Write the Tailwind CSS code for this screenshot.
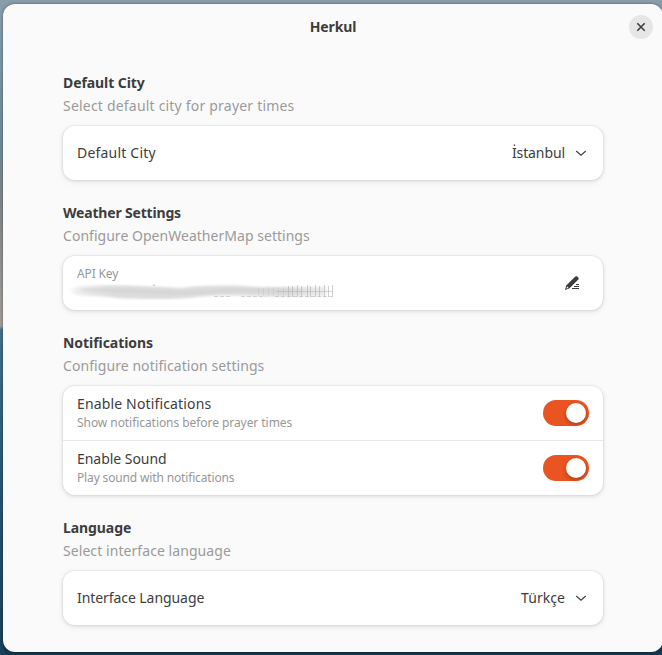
<!DOCTYPE html>
<html lang="en">
<head>
<meta charset="utf-8">
<title>Herkul</title>
<script src="https://cdn.jsdelivr.net/npm/@tailwindcss/browser@4"></script>
</head>
<body class="h-[655px] w-[662px] overflow-hidden bg-[linear-gradient(180deg,#8a9dab_0px,#708b99_140px,#7d868b_190px,#8f8f8f_250px,#a39e9a_326px,#42718c_330px,#285675_480px,#1b405b_655px)] pt-1 pl-[3px] font-['Noto_Sans',sans-serif] text-[14px] text-[#3d3d3d]">
<main class="h-[648px] w-[660px] rounded-xl bg-[#fafafa] shadow-[0_0_3px_rgba(0,0,0,.45),0_6px_0_#133650]">
  <header class="grid h-[46px] grid-cols-[1fr_auto_1fr] items-center pr-[10px]">
    <h1 class="col-start-2 ml-[10px] pb-[2px] text-[14px] font-bold tracking-[-0.1px]">Herkul</h1>
    <button class="flex size-6 items-center justify-center justify-self-end rounded-full bg-[#e6e6e6]" aria-label="Close">
      <svg class="size-4" viewBox="0 0 16 16" fill="none" stroke="#3d3d3d" stroke-width="1.6"><path d="M4.3 4.3 11.7 11.7M11.7 4.3 4.3 11.7"/></svg>
    </button>
  </header>
  <div class="mx-[60px] flex flex-col gap-[23px] pt-[23px]">
    <section>
      <h2 class="h-5 text-[14px] leading-5 font-bold tracking-[-0.08px]">Default City</h2>
      <p class="mt-[3px] h-5 leading-5 tracking-[0.2px] text-[#9a9a9a]">Select default city for prayer times</p>
      <div class="mt-[10px] flex h-[54px] items-center rounded-xl bg-white px-[14px] shadow-[0_0_0_1px_rgba(0,0,0,.03),0_1px_3px_1px_rgba(0,0,0,.07),0_2px_6px_2px_rgba(0,0,0,.03)]">
        <span class="flex-1 pb-[2px] tracking-[0.2px]">Default City</span><span class="mr-[8px] pb-[2px] tracking-[-0.1px]">İstanbul</span>
        <svg class="size-4" viewBox="0 0 16 16" fill="none" stroke="#3d3d3d" stroke-width="1.1"><path d="M3.2 6 8 10.2 12.8 6"/></svg>
      </div>
    </section>
    <section>
      <h2 class="h-5 text-[14px] leading-5 font-bold tracking-[-0.18px]">Weather Settings</h2>
      <p class="mt-[3px] h-5 leading-5 tracking-[0.03px] text-[#9a9a9a]">Configure OpenWeatherMap settings</p>
      <div class="mt-[10px] flex h-[54px] items-start justify-between rounded-xl bg-white pr-[23px] pl-[5px] shadow-[0_0_0_1px_rgba(0,0,0,.03),0_1px_3px_1px_rgba(0,0,0,.07),0_2px_6px_2px_rgba(0,0,0,.03)]">
        <div>
          <div class="mt-[9px] ml-[9px] h-[17px] text-[12px] leading-[17px] tracking-[-0.15px] text-[#979797]">API Key</div>
          <svg class="block" width="268" height="22" viewBox="0 0 268 22">
            <defs>
              <filter id="soft" x="-10%" y="-40%" width="120%" height="180%"><feGaussianBlur stdDeviation="2 1.2"/></filter>
              <linearGradient id="ink"><stop offset="0" stop-color="#ccc" stop-opacity=".3"/><stop offset=".15" stop-color="#d4d4d4"/><stop offset=".6" stop-color="#d4d4d4"/><stop offset=".85" stop-color="#d4d4d4"/><stop offset="1" stop-color="#ddd" stop-opacity=".7"/></linearGradient>
            </defs>
            <path filter="url(#soft)" fill="url(#ink)" opacity=".8" d="M4 6 14 4C48 2 80 4 112 6C138 3 165 3 190 5L258 5V14L206 14.5C182 14 166 13 139 14C110 18 76 17.5 49 16C30 13 16 15 5 12Z"/>
            <path filter="url(#soft)" fill="none" stroke="#cacaca" stroke-width="3" opacity=".4" d="M14 8C65 7 97 13 140 10C170 6 200 10 234 9"/>
            <path d="M146 14.5H164M173 14.5H198M207 14.5H264" stroke="#c0c0c0" stroke-width="1" stroke-dasharray="4 2" opacity=".65"/>
            <path d="M208 9.5H264" stroke="#bbb" stroke-width="1" opacity=".6"/>
            <path d="M190.5 6V14M195.5 6V14M200.5 5V15M205.5 5V15M210.5 5V15M215.5 5V15" stroke="#bbb" stroke-width="1" opacity=".3"/>
            <path d="M220.5 4V15M224.5 4V15M229.5 3V15M233.5 4V15M239.5 3V15M242.5 4V15M247.5 3V15M251.5 4V15M256.5 3V15M260.5 4V15M264.5 3V15" stroke="#b5b5b5" stroke-width="1" opacity=".65"/>
            <circle cx="86" cy="3.2" r=".7" fill="#aaa"/>
          </svg>
        </div>
        <svg class="mt-[19px] size-4" viewBox="0 0 16 16" fill="#3d3d3d"><path d="M1 15 2.2 10.5 10.8 1.9C11.6 1 12.4 1 13.2 1.6L14.2 2.5C15 3.3 14.9 3.9 14.1 4.7L5.3 13.5ZM2.4 13.6 4.6 12.9 3.1 11.4Z" fill-rule="evenodd"/><path d="M12 9h3v1h-3zM10 11h5v1h-5zM8 13h7v1H8z"/></svg>
      </div>
    </section>
    <section>
      <h2 class="h-5 text-[14px] leading-5 font-bold tracking-[-0.05px]">Notifications</h2>
      <p class="mt-[3px] h-5 leading-5 tracking-[0.07px] text-[#9a9a9a]">Configure notification settings</p>
      <div class="mt-[10px] rounded-xl bg-white shadow-[0_0_0_1px_rgba(0,0,0,.03),0_1px_3px_1px_rgba(0,0,0,.07),0_2px_6px_2px_rgba(0,0,0,.03)]">
        <div class="flex h-[55px] items-center justify-between border-b border-[#e9e9e9] px-[14px]">
          <div class="pb-[2px]"><div class="h-5 leading-5 tracking-[0.15px]">Enable Notifications</div><div class="h-[17px] text-[12px] leading-[17px] tracking-[-0.06px] text-[#979797]">Show notifications before prayer times</div></div>
          <div class="flex h-[26px] w-[46px] items-center justify-end rounded-full bg-[#e95420] pr-[3px]"><div class="size-5 rounded-full bg-white shadow-[0_2px_4px_rgba(0,0,0,.25)]"></div></div>
        </div>
        <div class="flex h-[54px] items-center justify-between px-[14px]">
          <div class="pb-[2px]"><div class="h-5 leading-5 tracking-[-0.04px]">Enable Sound</div><div class="h-[17px] text-[12px] leading-[17px] tracking-[-0.15px] text-[#979797]">Play sound with notifications</div></div>
          <div class="flex h-[26px] w-[46px] items-center justify-end rounded-full bg-[#e95420] pr-[3px]"><div class="size-5 rounded-full bg-white shadow-[0_2px_4px_rgba(0,0,0,.25)]"></div></div>
        </div>
      </div>
    </section>
    <section>
      <h2 class="h-5 text-[14px] leading-5 font-bold tracking-[-0.08px]">Language</h2>
      <p class="mt-[3px] h-5 leading-5 tracking-[0.07px] text-[#9a9a9a]">Select interface language</p>
      <div class="mt-[10px] flex h-[54px] items-center rounded-xl bg-white px-[14px] shadow-[0_0_0_1px_rgba(0,0,0,.03),0_1px_3px_1px_rgba(0,0,0,.07),0_2px_6px_2px_rgba(0,0,0,.03)]">
        <span class="flex-1 pb-[2px] tracking-[-0.07px]">Interface Language</span><span class="mr-[8px] pb-[2px] tracking-[0.05px]">Türkçe</span>
        <svg class="size-4" viewBox="0 0 16 16" fill="none" stroke="#3d3d3d" stroke-width="1.1"><path d="M3.2 6 8 10.2 12.8 6"/></svg>
      </div>
    </section>
  </div>
</main>
</body>
</html>
